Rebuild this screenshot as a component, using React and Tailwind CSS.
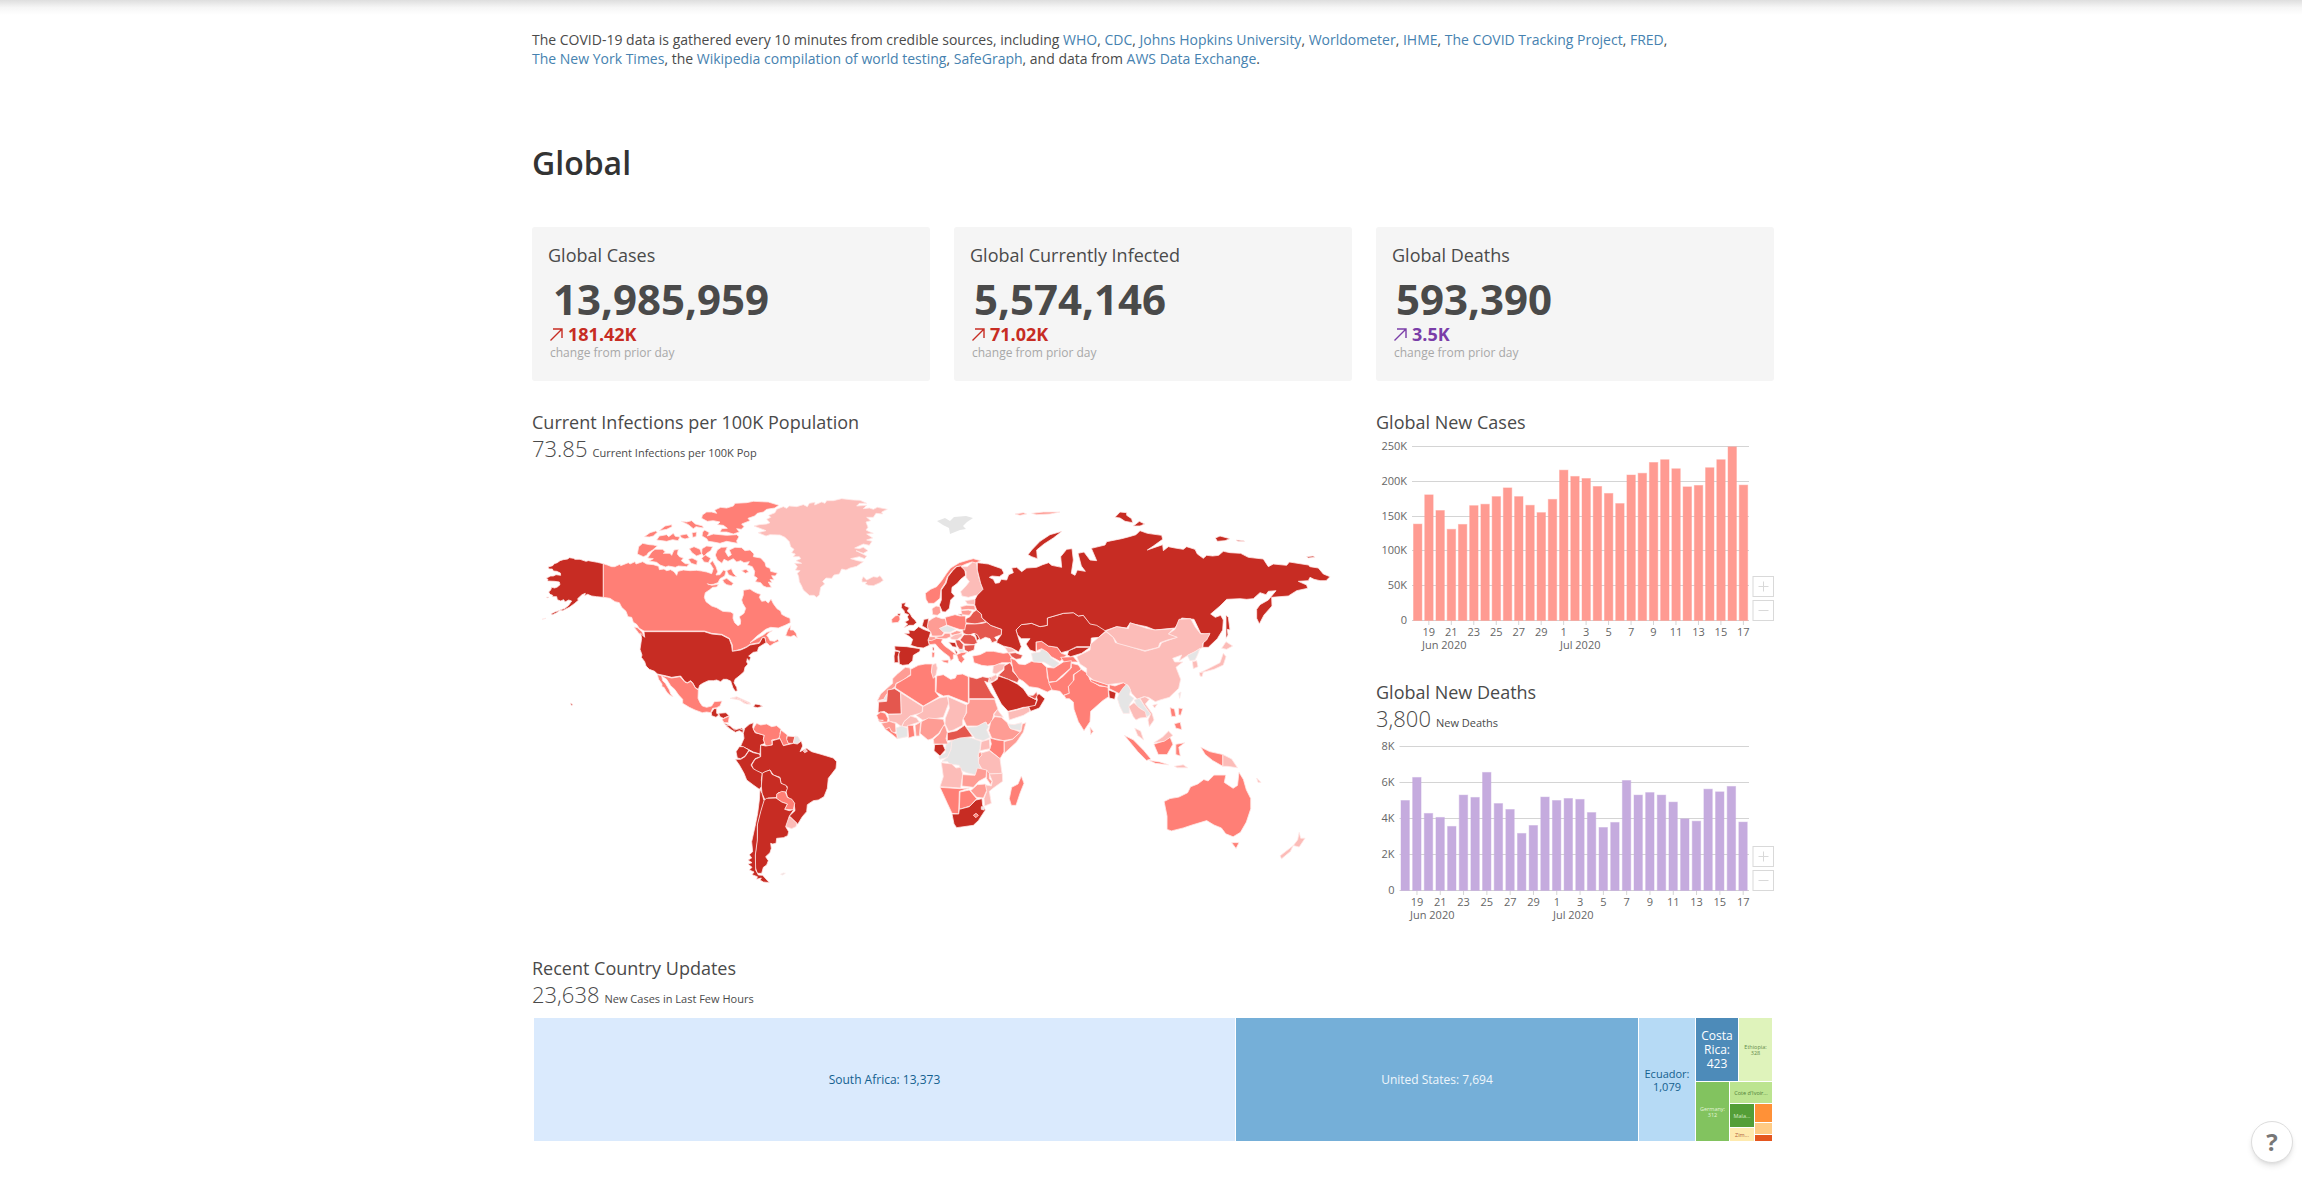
import React from "react";

const D = "#c72c23";
const M = "#e4574e";
const S = "#ff7f76";
const L = "#fe9c94";
const P = "#fcbcb8";
const G = "#e5e5e5";

const NORTH_AMERICA = [
  [D, "250,491 232,487 205,482 198,484 180,478 165,478 160,475 148,473 143,477 130,479 120,482 112,488 103,491 98,497 84,501 87,507 97,507 100,513 110,514 121,519 122,526 108,524 100,528 92,528 78,535 84,538 82,543 104,544 118,546 120,554 112,561 104,564 95,562 92,570 86,576 90,583 98,586 97,590 110,590 112,599 122,603 131,599 135,606 146,600 155,603 146,616 135,625 120,630 128,632 148,622 163,611 175,601 173,596 186,584 196,580 194,587 203,583 215,588 230,590 250,592"],
  [D, "120,631 106,635 94,641 96,645 110,638"],
  [D, "66,658 78,655 72,656"],
  [D, "78,592 86,591 84,594"],
  [S, "250,491 262,495 275,500 284,500 300,493 302,497 325,488 330,492 345,485 348,492 368,485 380,492 400,494 416,499 418,509 432,507 440,512 452,509 462,515 470,526 474,514 490,510 510,512 530,511 545,513 560,516 575,521 580,506 570,490 578,482 588,500 593,515 588,525 600,524 610,510 618,514 614,528 600,536 594,548 580,553 565,554 562,551 575,556 596,553 590,561 578,562 568,570 556,578 553,592 558,605 575,618 590,623 608,634 632,636 640,641 639,655 644,668 654,677 661,673 662,662 658,650 672,640 677,625 668,610 665,600 670,585 670,571 690,567 700,574 712,580 722,583 718,592 725,604 737,602 745,609 753,597 760,611 771,626 782,633 785,643 798,650 810,655 811,668 795,676 775,684 752,682 737,688 722,700 710,709 690,728 712,715 730,705 740,697 757,692 745,700 740,706 745,712 750,722 764,724 773,718 777,724 762,730 750,738 742,730 737,728 735,712 728,712 718,728 690,733 680,740 662,748 637,754 637,735 628,715 605,703 575,700 553,693 372,693 358,685 350,673 340,667 335,652 324,650 318,634 305,622 298,608 285,605 270,595 250,592"],
  [S, "797,707 803,690 812,677 811,690 820,690 828,700 832,713 822,706 812,710"],
  [S, "355,698 362,705 372,707 366,695 352,683 342,681"],
  [S, "356,440 368,430 388,434 400,435 412,438 398,450 385,458 380,466 370,470 352,462"],
  [S, "395,456 405,448 428,448 436,456 430,460 450,460 455,466 462,450 475,448 472,462 478,470 490,474 484,482 496,491 508,492 500,500 475,498 466,502 445,498 437,501 420,495 410,487 388,483 400,476 383,474"],
  [S, "373,410 390,398 407,393 412,397 400,408 388,411"],
  [S, "410,420 418,408 440,404 446,410 460,400 466,409 480,411 474,422 458,419 440,424"],
  [S, "418,392 435,378 455,374 456,380 440,388"],
  [S, "480,406 500,402 508,413 495,417 484,413"],
  [S, "484,364 500,366 515,362 526,372 548,378 550,384 528,380 520,386 505,374"],
  [S, "516,398 530,396 528,410 518,412"],
  [S, "508,446 522,440 540,448 545,462 530,468 516,458"],
  [S, "505,478 516,474 532,482 530,495 514,490"],
  [S, "546,446 560,438 578,440 572,452 560,460 552,470 545,460"],
  [S, "545,475 556,465 572,475 565,488 552,486"],
  [S, "554,390 568,398 562,408 580,402 600,404 620,406 650,404 657,410 650,422 652,430 620,424 600,430 580,426 565,424 560,416 546,408 548,396"],
  [S, "545,355 547,345 560,336 575,336 590,340 584,330 602,322 620,324 640,318 645,310 680,308 700,304 745,306 777,316 764,324 740,328 730,336 712,340 704,348 684,355 690,362 665,372 672,380 664,388 650,386 658,396 640,402 620,396 600,396 605,386 622,385 610,376 592,374 600,366 580,362 562,364"],
  [S, "586,465 592,450 604,442 622,441 616,455 625,470 634,464 628,450 645,442 665,443 675,452 690,450 702,462 700,470 722,474 735,488 738,500 750,505 752,514 772,519 766,528 755,527 762,540 750,538 756,548 745,546 754,562 740,562 730,558 722,548 706,545 712,534 702,528 704,514 697,500 682,495 688,485 672,488 662,482 650,486 640,476 624,484 612,478 606,490 592,480"],
  [S, "608,540 620,535 640,550 634,557 620,554 612,548"],
  [S, "665,512 678,508 686,516 676,520"],
  [S, "620,512 634,506 640,520 650,530 640,530 626,524"],
  [P, "702,378 718,374 740,372 750,368 740,358 752,352 746,346 765,338 770,328 790,320 800,325 808,318 830,320 850,314 862,320 868,310 885,307 884,315 905,306 915,310 920,302 940,302 965,296 1000,300 1020,301 1040,310 1018,310 1010,318 1040,316 1030,326 1048,324 1060,328 1072,322 1102,328 1085,336 1088,342 1068,340 1060,352 1040,352 1052,362 1038,366 1044,382 1038,390 1050,396 1060,400 1040,402 1058,414 1040,420 1056,424 1048,436 1030,432 1004,444 1018,446 1030,442 1044,452 1030,460 1008,452 1040,468 1034,476 1018,470 992,476 1012,482 1030,485 1010,499 990,504 978,510 965,507 958,522 942,525 935,535 918,534 908,544 914,552 902,562 898,585 890,592 882,586 868,586 850,570 845,558 838,545 836,530 832,520 840,512 826,510 832,500 824,490 845,490 828,482 842,476 838,470 820,470 826,462 815,458 822,448 812,440 808,425 795,412 780,405 750,404 738,408 714,398 738,392"],
  [P, "1026,538 1030,530 1040,540 1060,530 1072,532 1080,527 1090,541 1080,548 1060,557 1045,556 1036,552 1040,546 1026,546"],
  [D, "372,695 553,695 575,702 605,705 628,717 635,737 637,754 662,750 680,742 690,735 718,730 728,712 735,714 738,728 728,734 716,742 712,755 700,757 686,768 692,772 688,784 682,776 680,786 684,792 675,802 672,815 660,826 645,838 642,848 650,862 652,873 646,874 639,864 632,843 620,838 610,838 602,845 590,840 580,842 565,842 548,850 539,856 535,868 526,863 518,848 512,842 502,848 495,845 482,828 455,832 440,828 412,822 404,814 388,808 378,798 374,785 364,772 366,765 360,748 365,715 362,700 374,712"],
  [S, "412,824 440,830 455,834 480,830 495,847 503,849 512,844 518,850 526,864 535,870 534,895 540,908 547,918 560,922 575,918 583,905 606,903 600,918 590,923 578,925 572,938 560,936 547,938 525,930 508,922 488,910 488,898 476,885 464,868 452,857 440,838 425,828 428,842 436,850 448,870 452,882 459,890 450,886 440,876 432,862 426,860 426,852 416,838"],
  [D, "574,938 582,926 590,926 590,940 597,944 588,952 575,947"],
  [D, "596,940 618,938 627,947 610,955 600,950"],
  [S, "606,958 628,948 625,968 612,968"],
  [D, "612,970 625,974 634,985 650,988 665,984 672,990 650,993 628,986"],
  [P, "635,894 650,890 672,900 690,908 690,912 672,910 660,900 645,894"],
  [D, "706,912 718,914 728,919 712,923 700,920"],
  [D, "151,909 158,913 155,918"],
];

const SOUTH_AMERICA = [
  [D, "78,137 90,137 104,150 118,146 130,150 128,158 118,152 106,157 95,150"],
  [D, "130,160 134,145 148,133 160,128 158,142 165,158 180,162 193,166 190,178 195,190 182,195 180,222 160,216 145,208 122,198 132,175"],
  [S, "163,140 170,130 182,135 200,132 215,140 230,137 243,148 240,160 244,168 232,177 215,180 217,193 205,200 196,196 190,178 193,166 168,158 160,148"],
  [S, "243,150 262,165 260,175 266,192 250,197 244,185 238,172"],
  [M, "262,168 285,170 280,190 265,190 260,178"],
  [G, "285,168 294,170 301,182 292,192 280,188"],
  [D, "118,200 130,200 147,210 135,228 122,236 112,234 108,215"],
  [D, "106,238 122,238 135,230 147,212 160,218 178,222 182,230 165,236 153,255 160,266 175,272 187,280 184,300 186,318 178,328 160,315 140,300 132,280 118,255"],
  [D, "182,195 197,198 217,195 217,182 232,178 240,176 250,197 280,190 292,192 304,183 308,198 300,215 320,205 335,215 360,222 380,228 400,234 410,245 408,265 395,282 385,295 382,325 372,350 355,360 340,362 322,374 320,395 307,410 293,433 278,418 268,408 285,392 282,368 262,350 258,335 262,320 243,310 240,292 220,285 210,270 187,280 170,272 160,266 155,255 165,238 182,230"],
  [D, "187,280 195,275 210,270 216,283 240,294 243,310 258,316 262,325 258,336 235,338 228,353 205,354 195,360 186,340 184,318"],
  [S, "230,342 245,334 256,336 262,352 276,358 284,370 280,390 254,388 262,372 245,366 230,356"],
  [P, "263,412 272,412 291,430 288,440 275,446 257,440"],
  [D, "200,355 228,354 245,366 262,372 254,388 268,392 282,388 268,408 257,440 266,455 263,467 250,473 230,475 228,490 218,492 212,490 214,505 210,518 197,530 205,542 200,555 190,562 185,580 172,580 165,560 166,520 172,470 172,430 182,390 190,362"],
  [D, "180,328 186,340 192,362 182,395 172,435 172,480 166,525 167,570 175,585 188,586 208,608 190,606 180,600 184,594 170,598 172,590 156,584 162,576 148,570 156,562 144,552 156,548 144,540 155,534 148,524 158,515 155,485 165,440 173,400 178,360"],
  [P, "90,55 110,54 130,62 152,72 140,72 118,60"],
  [P, "310,213 318,208 322,214 314,218"],
  [G, "242,583 250,579 256,580 248,585"],
];

const OLD_WORLD = [
  [D, "125,190 137,188 134,197 148,203 142,213 151,222 156,232 165,240 170,248 160,256 148,256 132,263 143,252 134,246 146,240 142,230 146,224 134,220 132,212 124,203"],
  [S, "95,238 106,228 118,224 120,238 115,247 96,249"],
  [D, "112,222 121,220 120,228 114,227"],
  [S, "362,62 345,70 335,66 318,72 304,78 288,80 276,92 262,110 256,128 243,148 240,175 222,190 205,190 198,178 196,160 212,148 230,140 245,122 260,100 272,84 298,68 325,60 340,56"],
  [D, "290,80 302,78 314,88 317,106 302,118 292,130 276,142 275,158 284,168 272,180 268,205 256,216 247,215 238,195 244,180 244,150 258,130 264,110 278,92"],
  [P, "304,80 322,80 338,66 350,70 352,90 356,110 362,130 369,148 352,165 325,172 306,168 302,155 318,138 328,125 318,112 318,95"],
  [L, "216,206 228,198 240,200 242,218 232,226 218,224"],
  [P, "316,182 345,178 344,194 322,192"],
  [L, "302,200 320,196 344,197 346,210 325,208 304,210"],
  [L, "303,212 325,210 336,214 328,226 306,224"],
  [D, "294,222 308,223 305,228"],
  [M, "340,216 350,210 364,222 366,234 378,245 345,252 316,248 318,236 330,230"],
  [M, "318,252 345,252 368,250 380,246 392,256 425,268 424,284 404,292 412,302 396,308 390,296 376,292 360,300 355,290 342,280 325,286 310,280 308,272"],
  [S, "256,232 285,224 300,228 316,228 318,250 314,270 298,268 280,262 258,254"],
  [L, "203,246 216,236 228,230 246,236 256,236 260,255 242,264 252,278 245,288 216,288 212,276 202,264"],
  [G, "238,265 262,257 287,268 270,277 250,276"],
  [L, "272,280 290,272 306,275 296,282 275,286"],
  [L, "222,290 248,288 255,280 270,280 272,290 258,296 238,296"],
  [P, "270,293 285,284 306,280 306,288 290,300 275,298"],
  [M, "300,300 312,284 332,284 344,290 352,308 342,314 314,312"],
  [D, "342,280 352,284 358,296 350,302 348,290"],
  [M, "312,316 345,314 342,330 325,336 314,330"],
  [M, "286,300 298,300 310,314 308,330 298,328 290,315"],
  [D, "266,306 286,308 290,322 278,320"],
  [D, "284,328 292,336 290,344 286,336"],
  [G, "296,328 310,328 312,336 300,338"],
  [S, "290,344 304,338 322,336 314,344 306,348 314,358 304,370 296,362"],
  [S, "204,302 222,294 248,297 244,306 254,318 268,328 290,345 280,344 280,356 272,362 268,350 252,338 238,326 226,312 208,314"],
  [S, "245,361 266,360 264,370 250,366"],
  [S, "216,336 224,338 222,352 216,352"],
  [D, "218,322 222,322 222,332 218,330"],
  [L, "206,290 224,290 228,296 214,302 204,300"],
  [D, "132,280 148,280 146,270 162,272 176,260 190,268 212,276 208,290 204,300 208,316 190,324 172,322 152,316 158,298 146,288"],
  [D, "192,238 206,236 202,260 205,268 186,258"],
  [D, "104,318 140,320 180,326 180,334 160,346 158,362 145,374 128,376 118,372 116,340 120,334 105,330"],
  [D, "105,333 118,335 114,350 115,368 103,368 102,348"],
  [S, "338,348 360,344 380,334 400,334 430,340 445,338 454,352 454,368 425,368 408,376 382,378 365,376 342,368"],
  [L, "136,382 150,384 153,402 130,420 108,430 105,444 88,452 72,478 52,482 62,462 82,444 98,430 98,416 112,402"],
  [G, "52,484 70,480 80,462 104,446 104,440 84,460 80,480"],
  [S, "152,388 175,376 195,372 217,372 215,396 226,414 226,455 238,470 190,498 106,444 108,432 152,406"],
  [P, "217,374 228,370 232,384 228,404 220,415 214,396"],
  [S, "230,408 250,404 272,418 286,414 290,404 308,402 325,410 325,490 265,466 250,468 228,456"],
  [M, "327,410 350,416 368,410 388,414 384,428 374,424 394,460 406,476 327,476"],
  [M, "82,462 82,450 104,446 122,458 124,522 85,522 72,514 54,518 56,486 80,484"],
  [P, "122,458 188,500 186,518 150,528 132,545 125,560 108,548 88,544 84,524 124,522"],
  [P, "188,500 238,474 262,470 266,490 250,532 225,536 188,540 168,526 188,515"],
  [P, "264,470 320,495 318,520 308,540 308,556 280,570 266,574 255,552 256,535 268,505"],
  [L, "328,478 404,478 414,508 402,520 396,545 382,556 378,546 355,558 320,558 310,536 320,518 320,494 327,490"],
  [G, "320,562 350,560 376,546 386,560 380,570 390,592 370,602 346,596"],
  [P, "402,524 412,508 430,532 420,530 404,528"],
  [L, "392,546 404,530 424,532 442,548 450,565 482,576 458,597 430,602 395,594 386,572"],
  [G, "444,552 462,554 485,548 482,572 452,566"],
  [L, "483,574 487,552 498,548 490,576 470,606 433,640 432,605 458,598"],
  [S, "390,594 412,600 432,602 432,636 420,656 388,630 394,612"],
  [P, "364,605 388,598 390,626 360,632"],
  [P, "360,640 388,632 420,656 426,700 386,702 368,690 354,668"],
  [L, "354,640 362,636 366,645 356,655"],
  [G, "275,602 300,592 335,594 362,604 360,626 354,648 356,670 362,684 350,705 320,698 302,690 298,676 270,672 262,664 246,664 262,652 272,630"],
  [G, "258,612 276,602 272,630 262,652 240,658 236,650 256,638"],
  [D, "224,614 248,612 256,630 240,648 222,632"],
  [L, "222,612 220,598 238,582 250,556 256,558 262,578 258,596 264,612"],
  [M, "262,578 290,572 314,556 338,590 300,594 280,600 262,602"],
  [L, "184,545 205,534 250,538 254,552 236,580 216,596 204,600 180,580"],
  [P, "126,560 132,545 152,528 170,534 178,546 150,555 140,560"],
  [S, "143,556 160,556 164,588 146,594"],
  [L, "165,556 182,546 178,588 168,588"],
  [G, "108,564 125,558 142,564 142,590 112,596"],
  [L, "64,550 88,544 106,550 108,575 98,580 88,564 76,568"],
  [S, "76,568 88,562 94,574 110,582 112,596 92,580"],
  [S, "50,526 62,516 76,520 84,536 82,546 58,546"],
  [D, "56,540 70,541 58,543"],
  [P, "244,668 275,672 288,684 302,682 308,702 302,744 240,740 250,710"],
  [L, "308,704 345,706 352,684 380,690 378,712 356,724 340,742 306,738"],
  [L, "380,690 388,700 388,716 396,724 392,734 380,716"],
  [P, "388,702 427,700 428,724 400,744 388,754 394,790 374,798 372,776 380,754 374,734 394,738 397,724"],
  [L, "332,752 352,734 376,732 380,752 370,774 350,772"],
  [S, "240,742 300,746 328,744 298,754 296,822 276,820 262,790"],
  [S, "300,756 328,750 350,776 330,798 298,808"],
  [D, "276,822 296,822 298,808 328,800 348,780 366,776 368,796 376,810 355,842 340,856 290,863 282,852"],
  [S, "340,826 348,820 355,826 348,833"],
  [G, "364,800 372,800 372,810 364,808"],
  [S, "484,708 492,730 480,760 468,796 454,796 448,776 455,742 474,732"],
  [P, "400,378 415,372 436,372 430,388 408,402 398,398"],
  [M, "432,378 450,368 458,382 458,394 478,416 472,428 445,418 415,406 432,390"],
  [P, "392,412 408,404 412,412 400,424 390,424"],
  [D, "388,412 393,412 390,428"],
  [D, "392,430 412,418 415,408 445,418 472,432 490,446 505,468 530,480 524,500 490,502 470,508 444,514 424,492 408,462"],
  [P, "444,516 470,510 490,504 506,500 510,514 490,526 448,540"],
  [D, "512,514 506,500 526,496 532,480 528,464 538,462 555,476 538,504"],
  [M, "504,466 520,466 530,455 532,466 526,478"],
  [P, "434,322 455,324 466,334 445,338"],
  [M, "448,340 466,338 488,346 482,356 468,358 455,350"],
  [S, "452,354 466,360 476,372 495,374 515,364 545,368 560,382 562,412 578,448 562,456 535,444 508,440 490,424 476,416 460,392"],
  [G, "514,340 540,336 545,326 566,338 572,352 598,370 582,384 552,366 520,366"],
  [S, "528,306 545,304 565,318 592,322 604,340 620,345 600,364 574,350 562,336 545,326 530,332"],
  [S, "602,352 640,350 654,366 612,366"],
  [D, "626,332 650,322 690,322 665,340 632,350 622,345"],
  [S, "560,382 582,384 610,366 634,362 632,384 600,412 588,424 566,426"],
  [S, "566,428 590,424 608,410 634,384 634,370 655,375 664,388 640,404 640,424 625,440 628,460 610,466 600,454 576,450"],
  [D, "468,270 484,254 515,250 540,260 562,256 562,234 610,220 640,218 655,228 670,226 690,250 715,255 738,272 716,292 694,294 692,320 650,320 626,332 604,338 592,322 565,318 545,304 528,306 528,336 510,330 498,312 510,296 484,296 472,284"],
  [S, "628,476 618,476 612,466 628,460 625,440 642,420 642,404 664,388 682,400 690,420 718,438 744,440 746,470 728,482 692,514 690,545 672,572 655,545 642,508 640,486"],
  [S, "692,418 718,426 744,434 744,442 718,436 692,424"],
  [S, "748,434 765,438 790,428 802,434 790,446 780,462 768,456 748,446"],
  [D, "746,450 768,458 764,478 748,474"],
  [L, "690,562 700,574 692,584"],
  [D, "352,68 368,70 385,72 402,78 425,86 432,100 418,110 396,108 388,112 400,118 406,130 418,128 424,118 440,120 446,104 460,98 455,84 470,82 485,95 500,84 530,82 548,74 566,68 575,76 605,82 602,50 620,28 636,26 640,60 634,100 645,106 652,90 676,94 664,78 654,40 672,36 690,60 710,62 704,48 694,25 735,15 740,5 785,-4 808,-10 828,-16 840,-28 862,-20 905,-14 908,-2 880,18 862,30 908,14 910,32 925,20 945,24 970,28 980,20 1005,28 1012,42 1030,55 1040,46 1058,48 1076,46 1090,34 1110,38 1142,40 1165,52 1210,57 1225,80 1240,72 1280,76 1288,66 1345,75 1350,80 1375,84 1390,102 1410,110 1398,122 1380,122 1362,118 1350,112 1345,122 1315,124 1340,135 1343,145 1310,152 1285,168 1235,172 1236,198 1212,225 1198,252 1190,235 1190,208 1200,194 1225,180 1248,152 1225,154 1218,164 1200,158 1180,176 1160,178 1140,176 1100,178 1080,198 1052,222 1066,232 1082,226 1090,240 1088,270 1072,296 1045,322 1028,322 1030,308 1048,284 1022,280 1002,238 965,234 945,264 885,270 860,260 810,250 800,264 770,260 735,272 710,256 690,252 670,226 655,228 640,218 610,220 562,234 562,256 540,260 515,250 484,254 468,270 476,296 484,320 476,336 455,324 430,318 410,308 412,300 424,284 425,268 392,256 380,246 366,234 364,222 350,210 344,194 345,178 352,165 369,148 362,130 352,90"],
  [D, "504,44 515,30 540,4 570,-16 606,-26 580,-6 552,12 530,30 532,56 515,50"],
  [D, "765,-68 780,-84 800,-82 800,-74 815,-64 818,-52 795,-56 780,-66"],
  [D, "820,-42 838,-56 854,-48 840,-42"],
  [D, "1066,-6 1080,-12 1110,-4 1095,2 1072,4"],
  [D, "1128,0 1150,2 1154,4 1134,4"],
  [D, "1340,50 1360,48 1364,52 1344,54"],
  [L, "465,-78 490,-82 500,-78 480,-74"],
  [L, "515,-80 550,-84 600,-84 570,-78 530,-76"],
];

const EAST_ASIA = [
  [P, "78,455 100,472 106,488 125,492 160,503 195,514 238,502 245,488 290,472 265,462 285,448 297,418 332,416 345,440 362,462 390,460 380,480 368,490 368,502 345,515 325,525 298,542 305,525 278,535 284,546 308,546 288,562 302,598 296,625 268,652 240,660 226,665 205,652 190,650 172,658 155,640 146,618 130,608 82,614 40,600 20,585 20,565 0,552 -10,530 30,510 32,492 56,472"],
  [P, "78,453 110,440 145,446 150,428 200,445 225,450 280,446 265,462 292,472 262,480 240,488 235,502 195,512 160,503 112,490 100,472"],
  [G, "322,526 345,515 360,505 352,526 345,540 330,542"],
  [P, "337,545 350,542 354,560 340,566"],
  [P, "425,505 438,485 458,498 440,508"],
  [P, "430,520 438,530 430,555 402,568 380,574 360,578 385,566 405,556 420,548"],
  [P, "358,578 370,576 366,590 360,588"],
  [D, "438,405 445,412 450,450 442,448 444,465 438,475"],
  [G, "296,640 303,636 299,655"],
  [P, "218,676 232,672 224,684"],
  [G, "112,655 118,640 128,625 140,612 152,630 148,645 162,655 148,674 148,700 130,700 120,680"],
  [S, "296,684 308,686 302,706 296,704"],
  [G, "163,660 178,655 195,680 212,702 200,712 188,690 170,678"],
  [P, "180,655 195,650 208,658 196,672 216,700 222,720 208,740 204,720 212,702 192,675"],
  [P, "146,680 162,668 178,684 196,695 200,712 180,714 168,720 160,710"],
];

const OCEANIA = [
  [S, "793,546 797,544 803,543 809,540 811,536 816,534 820,531 823,532 827,528 835,528 834,533 840,537 843,535 844,526 847,531 849,538 852,544 852,551 849,560 845,567 840,570 835,568 832,564 827,562 822,559 812,562 806,564 798,566 795,565 795,556"],
  [S, "839,574 844,574 842,578"],
  [P, "885,567 886,571 889,571 885,577 881,576 884,572"],
  [P, "881,576 879,580 873,585 872,583"],
  [S, "766,501 772,504 779,511 784,517 781,518 775,512"],
  [S, "783,518 790,519 796,521 787,520"],
  [P, "800,522 806,521 809,523 802,523"],
  [S, "786,507 792,505 797,502 799,507 795,514 789,514"],
  [P, "786,506 792,502 796,498 799,501 793,505"],
  [S, "801,507 807,506 803,509 804,515 801,514"],
  [S, "818,509 824,512 833,514 833,522 826,518 821,514"],
  [P, "833,514 839,517 843,523 836,522 833,522"],
  [P, "773,496 777,498 779,504 775,501"],
  [S, "800,493 804,492 805,497 801,496"],
  [S, "797,482 800,483 801,488 798,488"],
  [P, "856,530 859,533 857,533"],
];

const Region = ({ shapes, origin, scale }) => (
  <g transform={`translate(${origin[0]} ${origin[1]}) scale(${scale})`}>
    {shapes.map(([fill, points], i) => (
      <polygon key={i} points={points} fill={fill} stroke="#ffe9e7" strokeWidth="0.8" strokeLinejoin="round" vectorEffect="non-scaling-stroke" />
    ))}
  </g>
);

const WorldMap = () => (
  <svg className="block h-[470px] w-[820px]" viewBox="532 462 820 470">
    <Region shapes={NORTH_AMERICA} origin={[520, 400]} scale={1 / 3} />
    <Region shapes={SOUTH_AMERICA} origin={[700, 680]} scale={1 / 3} />
    <Region shapes={OLD_WORLD} origin={[860, 540]} scale={1 / 3} />
    <Region shapes={EAST_ASIA} origin={[1080, 480]} scale={1 / 3} />
    <Region shapes={OCEANIA} origin={[0, 0]} scale={1.468} />
    <path d="M937 521l8-3 5 3 4-4 12-1 7 2-6 4-4 4 3 3-6 1-5 2-5 2-1-6-6-3z" fill={G} />
  </svg>
);

const CASES = [138.5, 180.5, 158, 131, 138, 165, 167, 178, 190.5, 178, 165.5, 155, 174, 216, 207, 204, 192.5, 182.5, 168, 209, 211.5, 227, 231, 218, 192, 194, 219.5, 231, 249.5, 194.5];
const DEATHS = [5.0, 6.28, 4.28, 4.06, 3.56, 5.3, 5.17, 6.56, 4.83, 4.5, 3.17, 3.61, 5.19, 5.0, 5.11, 5.06, 4.33, 3.5, 3.78, 6.11, 5.3, 5.44, 5.3, 4.91, 3.98, 3.85, 5.63, 5.48, 5.78, 3.8];
const DAYS = ["19", "21", "23", "25", "27", "29", "1", "3", "5", "7", "9", "11", "13", "15", "17"];

const BarChart = ({ values, max, ticks, left, top, base, height, fill, junX, julX }) => {
  const right = 373;
  const pitch = (right - left) / values.length;
  return (
    <svg className="block w-[398px] font-['Open_Sans',sans-serif] text-[11px]" height={height} viewBox={`0 0 398 ${height}`}>
      {ticks.map((t, i) => {
        const y = Math.round(base - ((base - top) * i) / (ticks.length - 1)) + 0.5;
        return (
          <g key={t}>
            <line x1={left} x2={right} y1={y} y2={y} stroke="#d4d4d4" />
            <text x={left - 5} y={y + 3.5} textAnchor="end" fill="#666">{t}</text>
          </g>
        );
      })}
      {values.map((v, i) => {
        const h = ((base - top) * v) / max;
        return <rect key={i} x={left + i * pitch + 1.5} y={base - h + 0.5} width={8.4} height={h} fill={fill} stroke={fill} strokeOpacity="0.45" strokeWidth="1" />;
      })}
      {DAYS.map((d, i) => {
        const x = left + (2 * i + 1.5) * pitch;
        return (
          <g key={d}>
            <line x1={x} x2={x} y1={base + 1} y2={base + 5} stroke="#d4d4d4" />
            <text x={x} y={base + 16} textAnchor="middle" fill="#666">{d}</text>
          </g>
        );
      })}
      <text x={junX} y={base + 29} fill="#666">Jun 2020</text>
      <text x={julX} y={base + 29} fill="#666">Jul 2020</text>
      {[0, 24].map((dy) => (
        <g key={dy} stroke="#d9d9d9" fill="none">
          <rect x="377" y={base - 44 + dy + 0.5} width="20.5" height="20" />
          <path d={`M382.5 ${base - 34 + dy + 0.5}h10${dy ? "" : `M387.5 ${base - 39 + 0.5}v10`}`} />
        </g>
      ))}
    </svg>
  );
};

const Card = ({ title, value, change, tone, pad }) => (
  <div className="h-[154px] w-[398px] rounded-[3px] bg-[#f5f5f5] pl-4 pt-4">
    <h3 className="text-[18px] leading-6 text-[#4a4a4a]">{title}</h3>
    <div className={`${pad} mt-1 text-[42px] leading-[56px] font-bold text-[#4a4a4a]`}>{value}</div>
    <div className={`-mt-[5px] flex items-center gap-[5px] pl-0.5 text-[18px] leading-6 font-bold ${tone}`}>
      <svg className="size-[13px]" viewBox="0 0 13 13" fill="none" stroke="currentColor" strokeWidth="1.4">
        <path d="M.5 12.5 12 1M3 1h9v9" />
      </svg>
      {change}
    </div>
    <div className="-mt-px pl-0.5 text-[12px] leading-4 text-[#a8a8a8]">change from prior day</div>
  </div>
);

const Heading = ({ title, value, label }) => (
  <div className="text-[#4a4a4a]">
    <h3 className="text-[18px] leading-6">{title}</h3>
    {value && (
      <div className="flex h-7 items-baseline gap-[5px] leading-7">
        <span className="text-[22px] font-light">{value}</span>
        <span className="text-[11px]">{label}</span>
      </div>
    )}
  </div>
);

const A = ({ children }) => <a className="text-[#4682b0]">{children}</a>;

const Treemap = () => (
  <div className="mt-[10px] ml-[2px] flex h-[123px] w-[1238px] gap-px text-center text-[12px] leading-[13px]">
    <div className="flex w-[701px] items-center justify-center bg-[#daeafd] text-[#14618f]">South Africa: 13,373</div>
    <div className="flex w-[402px] items-center justify-center bg-[#75afd8] text-[#eff6fb]">United States: 7,694</div>
    <div className="flex w-[56px] items-center justify-center bg-[#b6daf5] text-[11px] text-[#14618f]">Ecuador:<br />1,079</div>
    <div className="flex flex-1 flex-col gap-px">
      <div className="flex h-[63px] gap-px">
        <div className="flex w-[42px] items-center justify-center bg-[#4d8bb9] text-[12px] leading-[14px] text-white">Costa<br />Rica:<br />423</div>
        <div className="flex flex-1 items-center justify-center bg-[#dff3bb] text-[5.5px] leading-[6px] text-[#5f8a4a]">Ethiopia:<br />328</div>
      </div>
      <div className="flex flex-1 gap-px">
        <div className="flex w-[33px] items-center justify-center bg-[#82c35f] text-[5.5px] leading-[6px] text-[#e4f5d8]">Germany:<br />312</div>
        <div className="flex flex-1 flex-col gap-px">
          <div className="flex h-[21px] items-center justify-center bg-[#bce490] text-[5.5px] leading-[6px] text-[#4f7f3a]">Cote d&#39;Ivoir...</div>
          <div className="flex flex-1 gap-px">
            <div className="flex w-[24px] flex-col gap-px text-[5.5px] leading-[6px]">
              <div className="flex h-[23px] items-center justify-center bg-[#549e37] text-[#d4ecc6]">Mala...</div>
              <div className="flex flex-1 items-center justify-center bg-[#feeaae] text-[#b0603a]">Zim...</div>
            </div>
            <div className="flex flex-1 flex-col gap-px">
              <div className="h-[18px] bg-[#ff9137]" />
              <div className="h-[11px] bg-[#ffcb84]" />
              <div className="flex-1 bg-[#e4561f]" />
            </div>
          </div>
        </div>
      </div>
    </div>
  </div>
);

export default function App() {
  return (
    <div className="relative h-[1178px] w-[2302px] overflow-hidden bg-white font-['Open_Sans',sans-serif] text-[#4a4a4a]">
      <div className="h-[15px] bg-linear-to-b from-[#dedede] via-[#f6f6f6] to-white" />
      <main className="ml-[532px] w-[1242px] pt-[15px]">
        <p className="text-[14px] leading-[19px] whitespace-nowrap">
          The COVID-19 data is gathered every 10 minutes from credible sources, including <A>WHO</A>, <A>CDC</A>, <A>Johns Hopkins University</A>, <A>Worldometer</A>, <A>IHME</A>, <A>The COVID Tracking Project</A>, <A>FRED</A>,
          <br />
          <A>The New York Times</A>, the <A>Wikipedia compilation of world testing</A>, <A>SafeGraph</A>, and data from <A>AWS Data Exchange</A>.
        </p>
        <h1 className="mt-[71px] text-[32px] leading-[48px] font-semibold text-[#333]">Global</h1>
        <div className="mt-[40px] flex gap-6">
          <Card title="Global Cases" value="13,985,959" change="181.42K" tone="text-[#c72c23]" pad="pl-[5px]" />
          <Card title="Global Currently Infected" value="5,574,146" change="71.02K" tone="text-[#c72c23]" pad="pl-[4px]" />
          <Card title="Global Deaths" value="593,390" change="3.5K" tone="text-[#7a3da8]" pad="pl-[4px]" />
        </div>
        <div className="mt-[29px] flex h-[546px] gap-6">
          <section className="w-[820px]">
            <Heading title="Current Infections per 100K Population" value="73.85" label="Current Infections per 100K Pop" />
            <WorldMap />
          </section>
          <section className="w-[398px]">
            <Heading title="Global New Cases" />
            <BarChart values={CASES} max={250} ticks={["0", "50K", "100K", "150K", "200K", "250K"]} left={36} top={12} base={186} height={246} fill="#ff9b92" junX={46} julX={184} />
            <Heading title="Global New Deaths" value="3,800" label="New Deaths" />
            <BarChart values={DEATHS} max={8} ticks={["0", "2K", "4K", "6K", "8K"]} left={23.5} top={14} base={158} height={200} fill="#c5abde" junX={34} julX={177} />
          </section>
        </div>
        <Heading title="Recent Country Updates" value="23,638" label="New Cases in Last Few Hours" />
        <Treemap />
      </main>
      <button className="absolute top-[1121px] left-[2251px] flex size-[42px] items-center justify-center rounded-full border border-[#ddd] bg-white text-[24px] leading-none font-bold text-[#777] shadow-md">?</button>
    </div>
  );
}
